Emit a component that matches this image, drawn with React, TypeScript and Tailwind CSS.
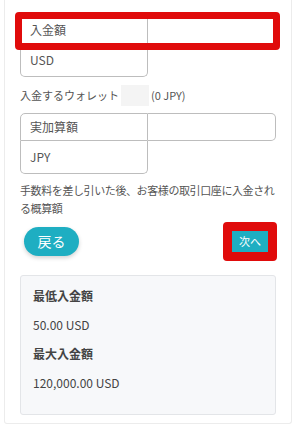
const font = { fontFamily: '"Noto Sans CJK JP", "Noto Sans", sans-serif' };

function InputGroup({ label, unit, marked }: { label: string; unit: string; marked?: boolean }) {
  return (
    <div className="relative">
      <div className="flex h-[28px]">
        <div className="flex w-[128px] items-center border border-[#bdbdbd] rounded-tl-[5px] px-[9px] text-[12px] text-[#555]">
          {label}
        </div>
        <div className="flex-1 border border-l-0 border-[#bdbdbd] rounded-r-[5px] bg-white"></div>
      </div>
      <div className="flex h-[33px] w-[128px] items-center border border-t-0 border-[#bdbdbd] rounded-b-[5px] px-[9px] text-[12px] text-[#555]">
        {unit}
      </div>
      {marked && (
        <div className="absolute left-[-5px] right-[-4px] top-[-4px] h-[38px] border-[7px] border-[#e00b0b] rounded-[4px]"></div>
      )}
    </div>
  );
}

export default function App() {
  return (
    <div className="h-[435px] w-[296px] bg-white px-[4px]" style={font}>
      <div className="border border-t-0 border-[#ececec] rounded-b-[3px] px-[15px] pt-[16px] pb-[6px] h-[424px]">
        <InputGroup label="入金額" unit="USD" marked />

        <div className="mt-[7px] flex h-[22px] items-center text-[11px] text-[#555]">
          <span>入金するウォレット</span>
          <span className="ml-[2px] inline-block h-[21px] w-[28px] bg-[#f4f4f4]"></span>
          <span className="ml-[2px]">(0 JPY)</span>
        </div>

        <div className="mt-[7px]">
          <InputGroup label="実加算額" unit="JPY" />
        </div>

        <p className="mt-[7px] text-[11px] tracking-[-0.4px] leading-[18px] text-[#555]">
          手数料を差し引いた後、お客様の取引口座に入金される概算額
        </p>

        <div className="mt-[5px] flex items-center justify-between">
          <button className="ml-[4px] h-[29px] w-[55px] rounded-full bg-[#1eaec2] text-[14px] text-white shadow-[0_2px_4px_rgba(0,0,0,0.18)]">
            戻る
          </button>
          <div className="mr-[-1px] rounded-[4px] border-[9px] border-[#e00b0b]">
            <button className="flex h-[21px] w-[36px] items-center justify-center bg-[#1eaec2] text-[11px] text-white">
              次へ
            </button>
          </div>
        </div>

        <div className="mt-[14px] h-[140px] rounded-[3px] border border-[#e3e5e8] bg-[#f7f8fa] px-[12px] pt-[11px] text-[12px] leading-[18px] text-[#444]">
          <div className="font-bold">最低入金額</div>
          <div className="mt-[11px]">50.00 USD</div>
          <div className="mt-[11px] font-bold">最大入金額</div>
          <div className="mt-[11px]">120,000.00 USD</div>
        </div>
      </div>
    </div>
  );
}
